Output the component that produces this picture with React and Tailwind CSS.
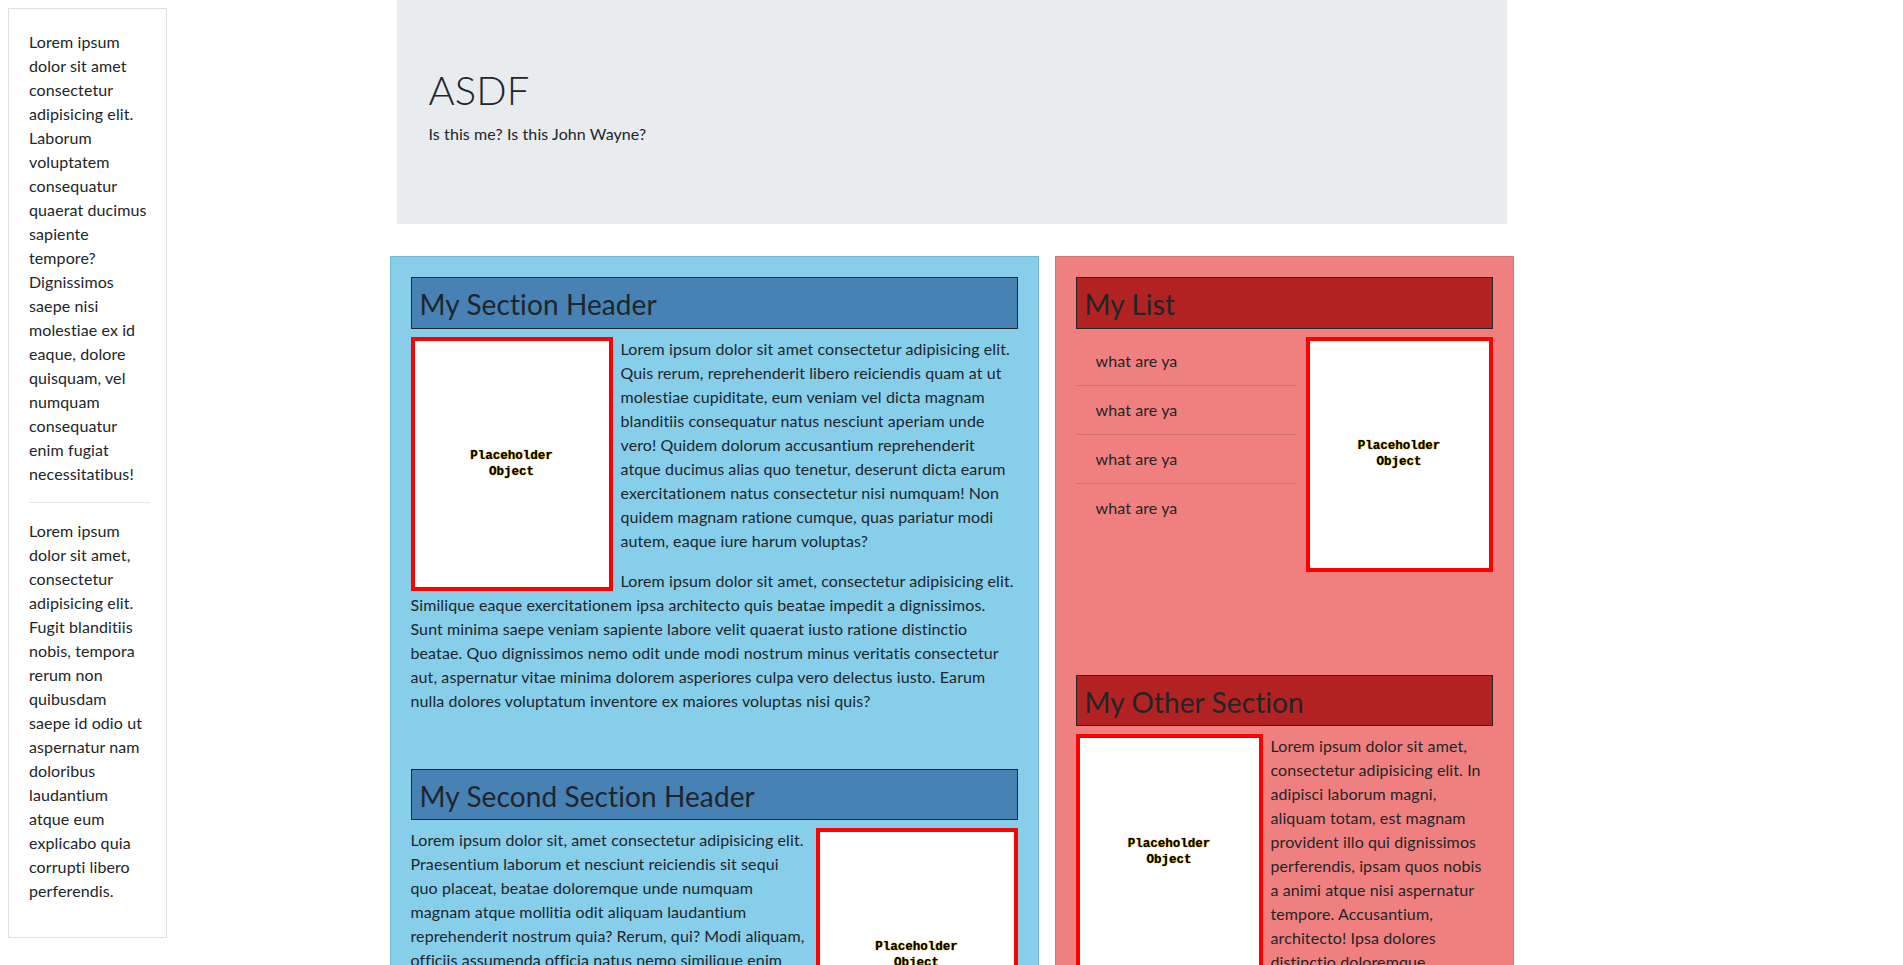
import React from "react";

function Placeholder({ className }) {
  return (
    <div className={`flex items-center justify-center border-4 border-[#ff0000] bg-white ${className}`}>
      <span className="text-center font-['Liberation_Mono',monospace] text-[12.5px] font-bold leading-4 tracking-normal text-black [text-shadow:0_0_1px_#c99a00,0_0_1px_#c99a00]">
        Placeholder
        <br />
        Object
      </span>
    </div>
  );
}

function BlueHeader({ children }) {
  return (
    <h3 className="mb-2 border border-[#212529] bg-[#4682b4] px-2 pb-[6px] pt-[10px] text-[28px] font-normal leading-[1.2]">
      {children}
    </h3>
  );
}

function RedHeader({ children }) {
  return (
    <h3 className="mb-2 border border-[#212529] bg-[#b22222] px-2 pb-[6px] pt-[10px] text-[28px] font-normal leading-[1.2]">
      {children}
    </h3>
  );
}

export default function App() {
  return (
    <div className="grid min-h-screen grid-cols-[1fr_1140px_1fr] bg-white font-['Lato',sans-serif] text-base leading-6 tracking-[0.1px] text-[#212529]">
      <aside className="col-start-1 row-start-1 m-2 w-[159px] self-start justify-self-start border border-[#dfdfdf] pb-[18px] pl-5 pr-4 pt-[21px]">
        <p className="mb-4">
          Lorem ipsum dolor sit amet consectetur adipisicing elit. Laborum voluptatem consequatur quaerat ducimus sapiente
          tempore? Dignissimos saepe nisi molestiae ex id eaque, dolore quisquam, vel numquam consequatur enim fugiat
          necessitatibus!
        </p>
        <hr className="my-4 border-t border-black/10" />
        <p className="mb-4">
          Lorem ipsum dolor sit amet, consectetur adipisicing elit. Fugit blanditiis nobis, tempora rerum non quibusdam
          saepe id odio ut aspernatur nam doloribus laudantium atque eum explicabo quia corrupti libero perferendis.
        </p>
      </aside>

      <main className="col-start-2 row-start-1 px-[15px]">
        <div className="mb-8 bg-[#e9ecef] px-8 pb-[62px] pt-[66px]">
          <h1 className="mb-2 text-[40px] font-light leading-[1.2]">ASDF</h1>
          <p className="mb-4">Is this me? Is this John Wayne?</p>
        </div>

        <div className="-mx-[15px] flex">
          <section className="mx-2 w-[649px] border border-[#72b7d5] bg-[#87ceeb] p-5">
            <div className="flow-root">
              <BlueHeader>My Section Header</BlueHeader>
              <Placeholder className="float-left mr-2 h-[254px] w-[202px]" />
              <p className="mb-4">
                Lorem ipsum dolor sit amet consectetur adipisicing elit. Quis rerum, reprehenderit libero reiciendis quam
                at ut molestiae cupiditate, eum veniam vel dicta magnam blanditiis consequatur natus nesciunt aperiam unde
                vero! Quidem dolorum accusantium reprehenderit atque ducimus alias quo tenetur, deserunt dicta earum
                exercitationem natus consectetur nisi numquam! Non quidem magnam ratione cumque, quas pariatur modi autem,
                eaque iure harum voluptas?
              </p>
              <p className="mb-4">
                Lorem ipsum dolor sit amet, consectetur adipisicing elit. Similique eaque exercitationem ipsa architecto
                quis beatae impedit a dignissimos. Sunt minima saepe veniam sapiente labore velit quaerat iusto ratione
                distinctio beatae. Quo dignissimos nemo odit unde modi nostrum minus veritatis consectetur aut, aspernatur
                vitae minima dolorem asperiores culpa vero delectus iusto. Earum nulla dolores voluptatum inventore ex
                maiores voluptas nisi quis?
              </p>
            </div>

            <div className="mt-10 flow-root">
              <BlueHeader>My Second Section Header</BlueHeader>
              <Placeholder className="float-right ml-2 h-[254px] w-[202px]" />
              <p className="mb-4">
                Lorem ipsum dolor sit, amet consectetur adipisicing elit. Praesentium laborum et nesciunt reiciendis sit
                sequi quo placeat, beatae doloremque unde numquam magnam atque mollitia odit aliquam laudantium
                reprehenderit nostrum quia? Rerum, qui? Modi aliquam, officiis assumenda officia natus nemo similique enim
                quibusdam, voluptate a ipsa obcaecati. Quaerat, dolores! Repellendus, doloribus.
              </p>
            </div>
          </section>

          <section className="mx-2 w-[459px] border border-[#d87272] bg-[#f08080] p-5">
            <div>
              <RedHeader>My List</RedHeader>
              <div className="grid grid-cols-[220px_187px] gap-x-[10px]">
                <ul>
                  <li className="border-b border-black/[0.125] px-5 py-3">what are ya</li>
                  <li className="border-b border-black/[0.125] px-5 py-3">what are ya</li>
                  <li className="border-b border-black/[0.125] px-5 py-3">what are ya</li>
                  <li className="px-5 py-3">what are ya</li>
                </ul>
                <Placeholder className="h-[235px] w-[187px]" />
              </div>
            </div>

            <div className="mt-[103px] flow-root">
              <RedHeader>My Other Section</RedHeader>
              <Placeholder className="float-left mr-2 h-[235px] w-[187px]" />
              <p className="mb-4">
                Lorem ipsum dolor sit amet, consectetur adipisicing elit. In adipisci laborum magni, aliquam totam, est
                magnam provident illo qui dignissimos perferendis, ipsam quos nobis a animi atque nisi aspernatur tempore.
                Accusantium, architecto! Ipsa dolores distinctio doloremque voluptatibus eveniet fugiat, nemo quidem!
              </p>
            </div>
          </section>
        </div>
      </main>
    </div>
  );
}
